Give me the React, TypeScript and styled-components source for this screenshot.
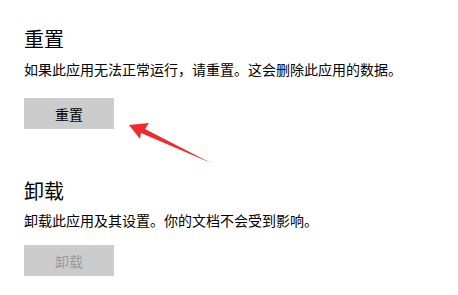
import React from "react";
import styled, { createGlobalStyle } from "styled-components";

const Global = createGlobalStyle`
  html, body { margin: 0; padding: 0; background: #ffffff; }
  body { font-family: "Noto Sans CJK SC", "Noto Sans", sans-serif; color: #000; }
`;

const Page = styled.div`
  position: relative;
  width: 458px;
  height: 295px;
  box-sizing: border-box;
  padding: 25px 24px 0 24px;
  overflow: hidden;
`;

const Section = styled.section<{ $gap?: number }>`
  display: flex;
  flex-direction: column;
  align-items: flex-start;
  margin-top: ${(p) => p.$gap ?? 0}px;
`;

const Heading = styled.h2`
  margin: 0;
  font-size: 20px;
  line-height: 28px;
  font-weight: 400;
  color: #000;
`;

const Desc = styled.p<{ $mt: number }>`
  margin: ${(p) => p.$mt}px 0 0 0;
  font-size: 14px;
  line-height: 20px;
  color: #000;
  white-space: nowrap;
`;

const Button = styled.button<{ $mt: number }>`
  margin-top: ${(p) => p.$mt}px;
  width: 90px;
  height: 31px;
  border: none;
  background: #cccccc;
  font-family: inherit;
  font-size: 14px;
  line-height: 20px;
  padding: 0;
  color: ${(p) => (p.disabled ? "#999999" : "#000000")};
  cursor: default;
`;

const ArrowSvg = styled.svg`
  position: absolute;
  left: 0;
  top: 0;
  pointer-events: none;
`;

export default function App() {
  return (
    <>
      <Global />
      <Page>
        <Section>
          <Heading>重置</Heading>
          <Desc $mt={6}>如果此应用无法正常运行，请重置。这会删除此应用的数据。</Desc>
          <Button $mt={19}>重置</Button>
        </Section>
        <Section $gap={48}>
          <Heading>卸载</Heading>
          <Desc $mt={5}>卸载此应用及其设置。你的文档不会受到影响。</Desc>
          <Button $mt={15} disabled>
            卸载
          </Button>
        </Section>
        <ArrowSvg width="458" height="295" viewBox="0 0 458 295">
          <polygon
            points="129,125 149,123 145,129 211,163 141,133 140,139"
            fill="#f02b2b"
          />
        </ArrowSvg>
      </Page>
    </>
  );
}
